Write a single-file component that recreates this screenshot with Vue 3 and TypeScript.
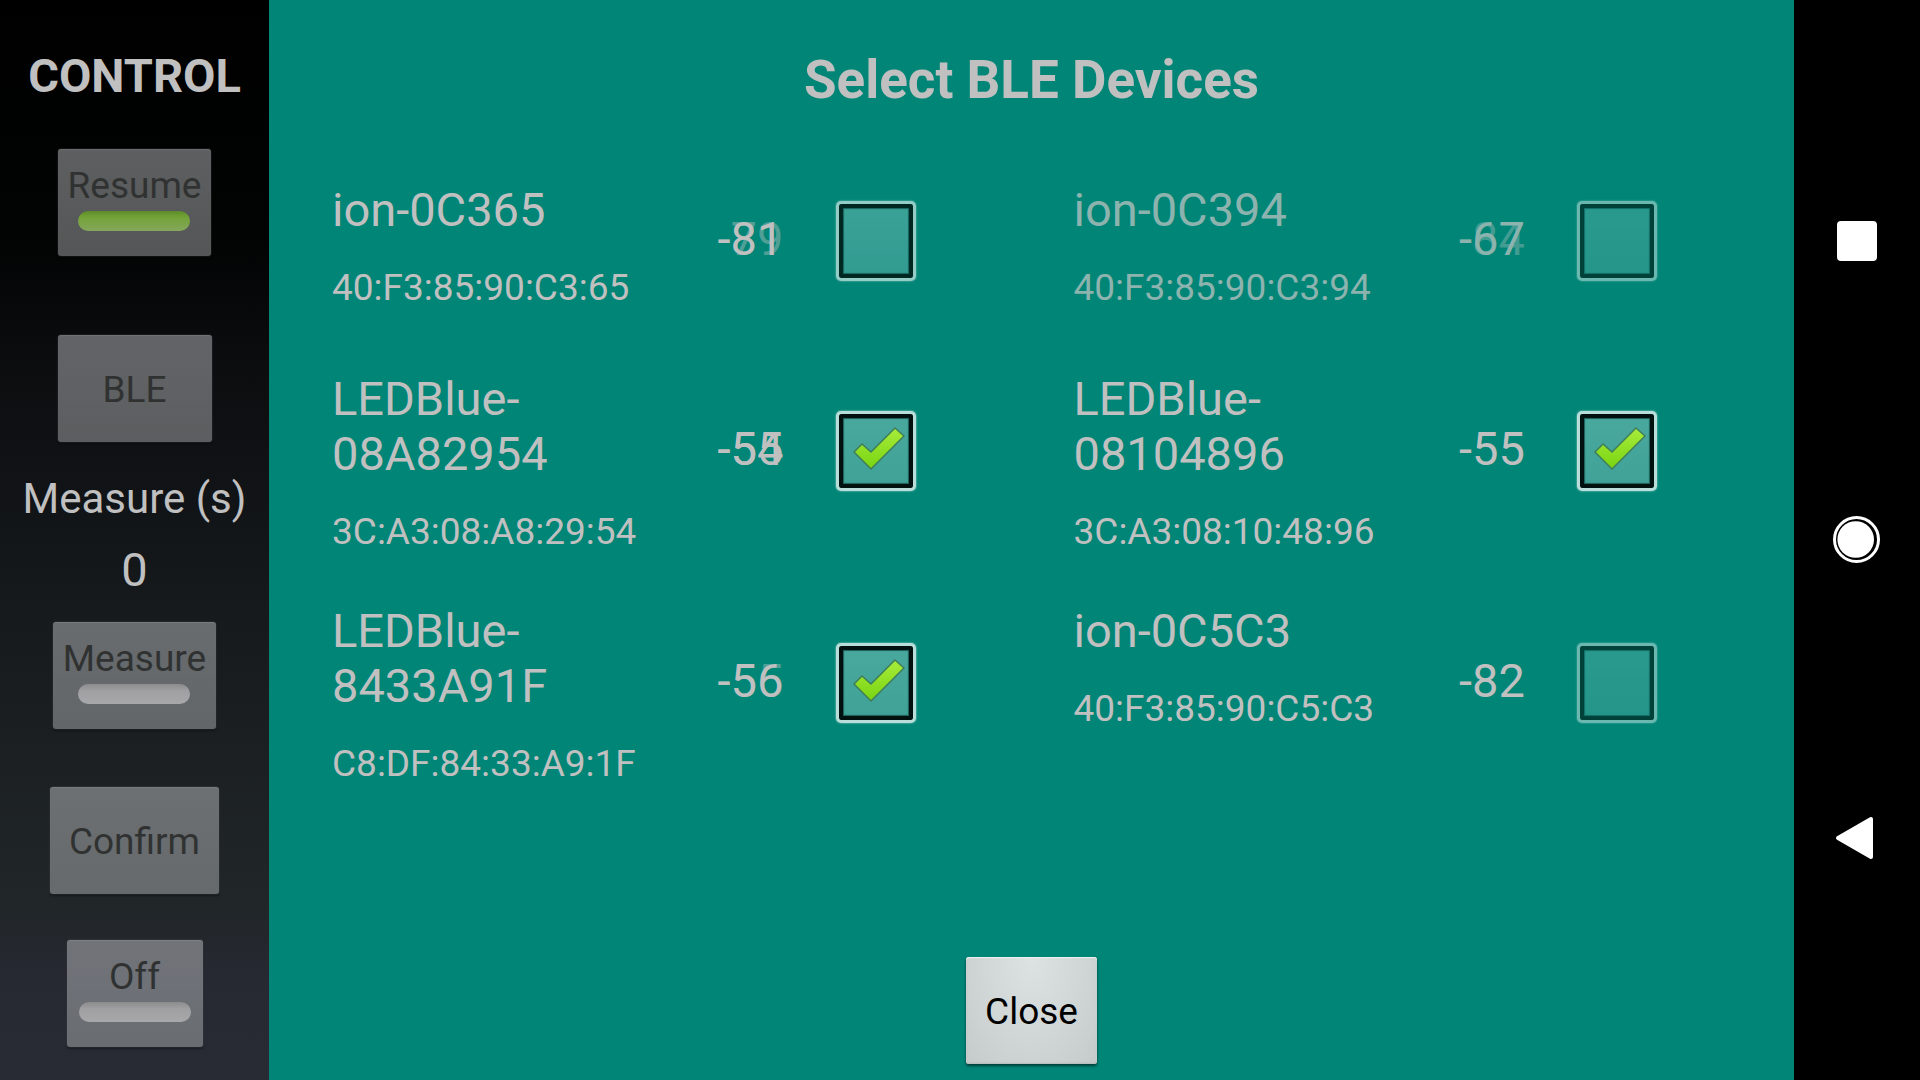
<script setup lang="ts">
import { ref } from 'vue'

interface Device {
  name: string
  address: string
  rssi: string
  previous?: string
  trail?: 'faint' | 'strong'
  fade: 'none' | 'light' | 'heavy'
  muted?: boolean
  selected: boolean
}

const devices = ref<Device[]>([
  { name: 'ion-0C365', address: '40:F3:85:90:C3:65', rssi: '-81', previous: '-79', trail: 'faint', fade: 'light', selected: false },
  { name: 'ion-0C394', address: '40:F3:85:90:C3:94', rssi: '-67', previous: '-84', trail: 'faint', fade: 'heavy', muted: true, selected: false },
  { name: 'LEDBlue-08A82954', address: '3C:A3:08:A8:29:54', rssi: '-55', previous: '-54', trail: 'strong', fade: 'none', selected: true },
  { name: 'LEDBlue-08104896', address: '3C:A3:08:10:48:96', rssi: '-55', fade: 'none', selected: true },
  { name: 'LEDBlue-8433A91F', address: 'C8:DF:84:33:A9:1F', rssi: '-56', previous: '-55', trail: 'faint', fade: 'none', selected: true },
  { name: 'ion-0C5C3', address: '40:F3:85:90:C5:C3', rssi: '-82', fade: 'heavy', selected: false },
])
</script>

<template>
  <div class="screen">
    <aside class="control">
      <h2 class="control-title">CONTROL</h2>
      <button type="button" class="btn toggle resume">Resume<span class="led on"></span></button>
      <button type="button" class="btn push ble">BLE</button>
      <p class="measure-label">Measure (s)</p>
      <p class="measure-value">0</p>
      <button type="button" class="btn toggle measure">Measure<span class="led"></span></button>
      <button type="button" class="btn push confirm">Confirm</button>
      <button type="button" class="btn toggle off">Off<span class="led"></span></button>
    </aside>

    <main class="panel">
      <h1 class="panel-title">Select BLE Devices</h1>
      <ul class="devices">
        <li v-for="(d, i) in devices" :key="d.address" class="device" :class="{ muted: d.muted }">
          <label class="info" :for="`device-${i}`">
            <span class="name">{{ d.name }}</span>
            <span class="address">{{ d.address }}</span>
          </label>
          <span class="rssi">
            <span v-if="d.previous" class="previous" :class="d.trail" aria-hidden="true">{{ d.previous }}</span>
            <span class="current">{{ d.rssi }}</span>
          </span>
          <span class="check" :class="d.fade">
            <input :id="`device-${i}`" v-model="d.selected" type="checkbox" />
            <svg v-if="d.selected" class="tick" viewBox="0 0 80 80" aria-hidden="true">
              <defs>
                <linearGradient :id="`tick-${i}`" x1="0" y1="0" x2="0" y2="1">
                  <stop offset="0" stop-color="#a8ec3c" />
                  <stop offset="1" stop-color="#78d410" />
                </linearGradient>
              </defs>
              <path
                d="M26 33 L35 41 L59 17 L68 25 L35 58 L18 41 Z"
                :fill="`url(#tick-${i})`"
                stroke="#3f7d58"
                stroke-width="1.5"
                stroke-linejoin="round"
              />
            </svg>
          </span>
        </li>
      </ul>
      <button type="button" class="btn push close">Close</button>
    </main>

    <nav class="system" aria-label="System navigation">
      <button type="button" aria-label="Recent apps">
        <svg viewBox="0 0 50 50"><rect x="5" y="5" width="40" height="40" rx="4" fill="#fff" /></svg>
      </button>
      <button type="button" aria-label="Home">
        <svg viewBox="0 0 50 50">
          <circle cx="24.5" cy="24.5" r="22" fill="none" stroke="#fff" stroke-width="3" />
          <circle cx="23.7" cy="24.5" r="18.3" fill="#fff" />
        </svg>
      </button>
      <button type="button" aria-label="Back">
        <svg viewBox="0 0 50 50">
          <path d="M6 24 L39 5 L39 43 Z" fill="#fff" stroke="#fff" stroke-width="4" stroke-linejoin="round" />
        </svg>
      </button>
    </nav>
  </div>
</template>

<style>
body {
  margin: 0;
  background: #000;
}
</style>

<style scoped>
.screen {
  display: flex;
  min-height: 100vh;
  font-family: Roboto, sans-serif;
  color: #c0c0c0;
}

.control {
  flex: 0 0 269px;
  box-sizing: border-box;
  display: flex;
  flex-direction: column;
  align-items: center;
  padding-top: 48px;
  background: linear-gradient(#000 0%, #020303 22%, #0c0d0f 34%, #15191c 55%, #212629 84%, #262931 90%, #282b34 100%);
}

.control-title {
  margin: 0 0 46px;
  font-size: 47px;
  line-height: 55px;
  font-weight: 700;
}

.btn {
  display: flex;
  flex-direction: column;
  align-items: center;
  box-sizing: border-box;
  height: 107px;
  border: 0;
  border-radius: 3px;
  font-family: inherit;
  font-size: 37px;
  line-height: 43px;
  white-space: nowrap;
}

.control .btn {
  color: #303232;
  background: linear-gradient(rgba(206, 208, 212, 0.45), rgba(192, 196, 196, 0.43));
  box-shadow: inset 0 1px 1px rgba(255, 255, 255, 0.1), 0 0 2px rgba(110, 114, 118, 0.5), 0 2px 2px rgba(0, 0, 0, 0.4);
}

.toggle {
  min-width: 136px;
  padding: 15px 10px 0;
}

.push {
  justify-content: center;
  padding: 2px 19px 0;
}

.led {
  width: 112px;
  height: 20px;
  margin-top: 4px;
  border-radius: 10px;
  background: linear-gradient(#8c8c8e, #a0a0a2 35%, #a8a8aa);
}

.led.on {
  background: linear-gradient(#5d8a2a, #72a336 30%, #85a75c);
}

.resume {
  margin-bottom: 79px;
}

.ble {
  min-width: 154px;
  margin-bottom: 32px;
}

.measure-label {
  margin: 0 0 19px;
  font-size: 42px;
  line-height: 49px;
}

.measure-value {
  margin: 0 0 25px;
  font-size: 47px;
  line-height: 55px;
}

.measure {
  margin-bottom: 58px;
}

.confirm {
  margin-bottom: 46px;
}

.panel {
  flex: 1;
  min-width: 0;
  box-sizing: border-box;
  display: flex;
  flex-direction: column;
  align-items: center;
  padding: 49px 21px 16px;
  background: #008577;
}

.panel-title {
  margin: 0 0 35px;
  font-size: 53px;
  line-height: 62px;
  font-weight: 700;
}

.devices {
  align-self: stretch;
  display: grid;
  grid-template-columns: 1fr 1fr;
  margin: 0 0 auto;
  padding: 0;
  list-style: none;
}

.device {
  box-sizing: border-box;
  display: flex;
  align-items: center;
  min-height: 189px;
  padding: 0 116px 0 42px;
}

.info {
  flex: 1;
  align-self: flex-start;
  display: flex;
  flex-direction: column;
  gap: 29px;
  padding: 36px 24px 14px 0;
}

.name {
  font-size: 47px;
  line-height: 55px;
}

.address {
  font-size: 37px;
  line-height: 43px;
}

.muted .info,
.muted .current {
  color: #8cb3ae;
}

.rssi {
  position: relative;
  flex: 0 0 118px;
  padding-bottom: 5px;
  font-size: 47px;
  line-height: 55px;
}

.current {
  position: relative;
}

.previous {
  position: absolute;
  left: 0;
  top: 0;
}

.previous.faint {
  color: #4f9f96;
}

.muted .previous.faint {
  color: #429c91;
}

.check {
  position: relative;
  flex: 0 0 80px;
  height: 80px;
}

.check.light {
  opacity: 0.8;
}

.check.heavy {
  opacity: 0.58;
}

.check input {
  appearance: none;
  display: block;
  box-sizing: border-box;
  width: 80px;
  height: 80px;
  margin: 0;
  border: 3px solid #b9deda;
  border-radius: 5px;
  background: linear-gradient(#4aa99f, #3fa197);
  box-shadow: inset 0 0 0 4px #00110f, inset 0 0 1px 5px #1d5d56, 0 0 2px #b9deda;
}

.tick {
  position: absolute;
  inset: 0;
  width: 80px;
  height: 80px;
  pointer-events: none;
}

.close {
  color: #000;
  background: radial-gradient(ellipse at 50% 0%, #dde3e3, #cfd5d5 60%, #c5caca);
  box-shadow: inset 0 1px 1px #eef2f2, inset 0 -1px 2px #b4baba, 0 2px 3px rgba(0, 0, 0, 0.55);
}

.system {
  flex: 0 0 126px;
  box-sizing: border-box;
  display: flex;
  flex-direction: column;
  align-items: center;
  justify-content: space-between;
  padding: 20vh 0;
  background: #000;
}

.system button {
  width: 50px;
  height: 50px;
  padding: 0;
  border: 0;
  background: none;
}

.system svg {
  display: block;
  width: 50px;
  height: 50px;
}
</style>
